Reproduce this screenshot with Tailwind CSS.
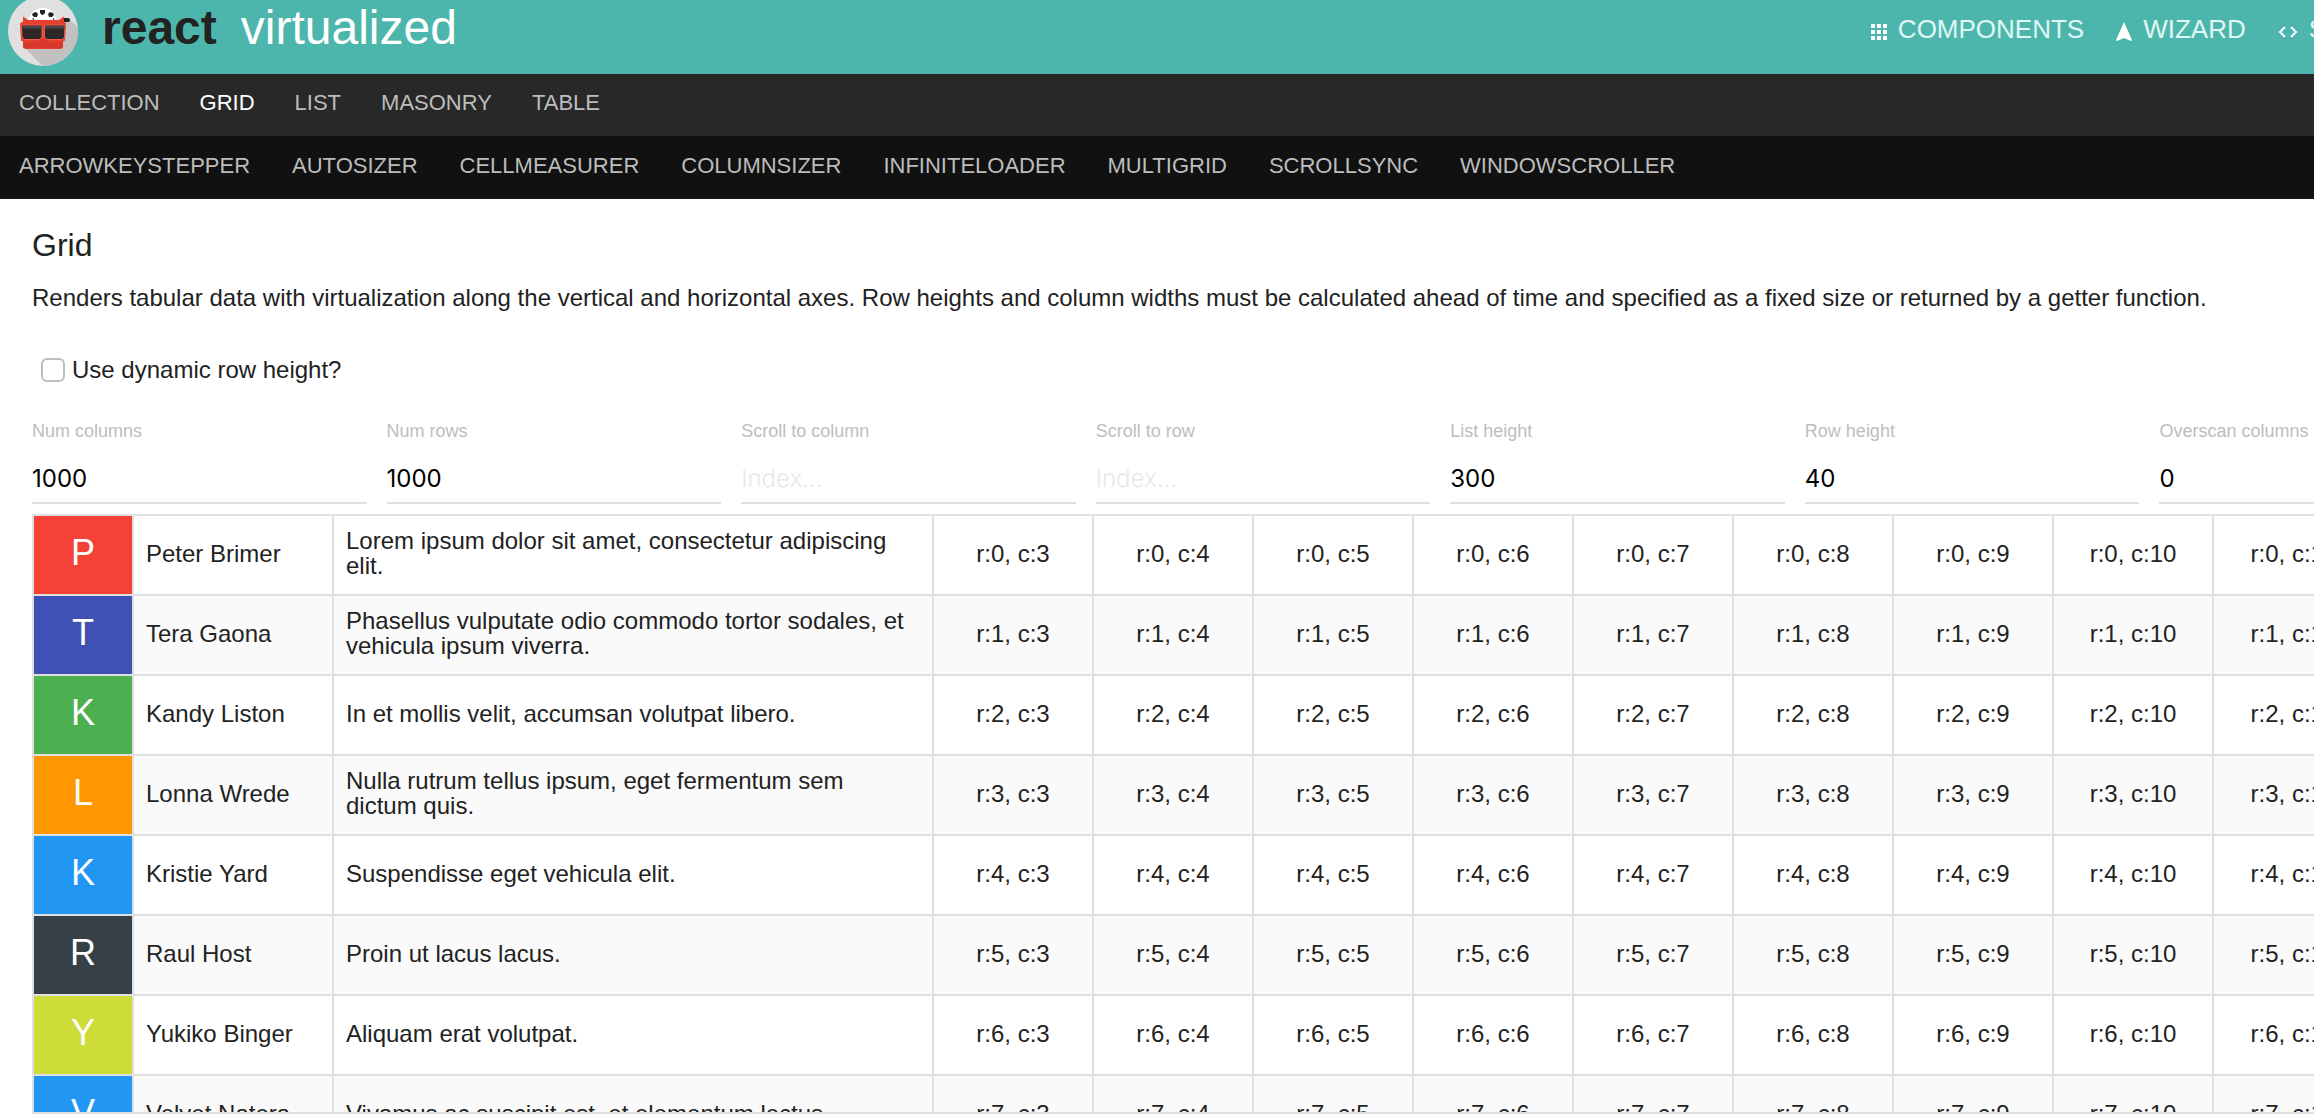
<!DOCTYPE html>
<html lang="en">

<head>
    <meta charset="UTF-8">
    <meta name="viewport" content="width=device-width, initial-scale=1.0">
    <title>react-virtualized</title>
    <!-- Tailwind CSS -->
    <script src="https://cdn.jsdelivr.net/npm/@tailwindcss/browser@4"></script>
</head>

<body class="bg-white font-['Liberation_Sans',Arial,sans-serif] text-2xl leading-[25px] text-[#222] overflow-hidden whitespace-nowrap">
    <!-- Header -->
    <header class="h-[74px] bg-[#4db6ac] flex items-start justify-between overflow-hidden">
        <a href="#" class="flex items-start">
            <svg class="w-[70px] h-[70px] ml-2 -mt-1 shrink-0" viewBox="0 0 70 70" role="img" aria-label="Logo">
                <circle cx="35" cy="35" r="35" fill="#e0e0e0"></circle>
                <path d="M17 52 L34.5 70 A35 35 0 0 0 69.8 31 L61 23 Z" fill="#c2c0c0"></path>
                <path d="M20 25 C22 16 28 12 35 12 C42 12 47 16 49 25 Z" fill="#fff"></path>
                <path d="M25 17l3-1 2 2-1 3-3 0-2-2zM32 14h5v3l-2 2h-1l-2-2zM42 16l3 1 1 2-2 2-3 0-1-3z" fill="#222"></path>
                <path d="M24 23l2-1v2zM45 22l2 1-2 1z" fill="#222"></path>
                <rect x="54" y="22" width="8" height="4" rx="2" fill="#222"></rect>
                <path d="M15 20.500l5 3.500h31l5-3.500v5l2 2-1 17-2 1v6l-2 1.500H17l-2-1.500v-6l-2-1-1-17 3-2z" fill="#e53f30"></path>
                <path d="M15 46h15l3-3h5l3 3h14v4l-2 2H17l-2-2z" fill="#d8372b"></path>
                <path d="M13.500 29h20.500v12l-2 2.500H16l-2-2.500zM36.500 29H57l-.5 12-2 2.500H38.500l-2-2.500z" fill="#2b2627" stroke="#f4594b"></path>
                <path d="M14.500 30h19v2.500h-19zM37 30h19.500v2.500H37z" fill="#4b4648"></path>
            </svg>
            <span class="ml-6 text-5xl leading-[56px] font-bold">react</span>
            <span class="ml-6 text-5xl leading-[56px] text-white">virtualized</span>
        </a>
        <nav class="flex shrink-0 -mr-[106px] mt-[17px] gap-8 text-[#e0f7f5] text-[26px]">
            <a href="#" class="flex items-center gap-[11px]">
                <svg class="w-4 h-4 mt-1" viewBox="0 0 16 16" fill="#fff"><path d="M0 0h4v4H0zM6 0h4v4H6zM12 0h4v4h-4zM0 6h4v4H0zM6 6h4v4H6zM12 6h4v4h-4zM0 12h4v4H0zM6 12h4v4H6zM12 12h4v4h-4z"></path></svg>
                COMPONENTS
            </a>
            <a href="#" class="flex items-center gap-[11px]">
                <svg class="w-4 h-5 mt-1" viewBox="0 0 16 20" fill="#fff"><path d="M8 0l8 18-1 1-7-3-7 3-1-1z"></path></svg>
                WIZARD
            </a>
            <a href="#" class="flex items-center gap-[11px]">
                <svg class="w-5 h-3 mt-1" viewBox="0 0 20 12" fill="none" stroke="#fff" stroke-width="2"><path d="M7 1L2 6l5 5M13 1l5 5-5 5"></path></svg>
                SOURCE
            </a>
        </nav>
    </header>

    <!-- Main navigation -->
    <nav class="h-[62px] bg-[#282828] flex items-center px-[19px] gap-10 text-[22px] text-[#bdbdbd] pb-1.5">
        <a href="#">COLLECTION</a>
        <a href="#" class="text-white">GRID</a>
        <a href="#">LIST</a>
        <a href="#">MASONRY</a>
        <a href="#">TABLE</a>
    </nav>

    <!-- Secondary navigation -->
    <nav class="h-[63px] bg-[#111] flex items-center px-[19px] gap-[42px] text-[22px] text-[#bdbdbd] pb-1">
        <a href="#">ARROWKEYSTEPPER</a>
        <a href="#">AUTOSIZER</a>
        <a href="#">CELLMEASURER</a>
        <a href="#">COLUMNSIZER</a>
        <a href="#">INFINITELOADER</a>
        <a href="#">MULTIGRID</a>
        <a href="#">SCROLLSYNC</a>
        <a href="#">WINDOWSCROLLER</a>
    </nav>

    <main class="pl-8 pt-7">
        <h1 class="text-[32px] leading-9">Grid</h1>
        <p class="mt-[19px] leading-8">Renders tabular data with virtualization along the vertical and horizontal axes. Row heights and column widths must be calculated ahead of time and specified as a fixed size or returned by a getter function.</p>
        <label class="mt-10 ml-[9px] flex items-center gap-[7px] leading-8">
            <input type="checkbox" class="appearance-none w-6 h-6 rounded-md border-2 border-[#bdbdbd] bg-white">
            Use dynamic row height?
        </label>

        <!-- Grid options -->
        <div id="options" class="mt-[33px] grid grid-cols-7 gap-5 w-[2462px]"></div>

        <!-- Data grid -->
        <div class="mt-[10px] h-[600px] border-2 border-r-0 border-[#e0e0e0] overflow-hidden">
            <table class="table-fixed border-separate border-spacing-0 w-[2658px]">
                <colgroup id="cols"></colgroup>
                <tbody id="rows"></tbody>
            </table>
        </div>
    </main>

    <script>
        const options = [
            ['Num columns', '1000'],
            ['Num rows', '1000'],
            ['Scroll to column', ''],
            ['Scroll to row', ''],
            ['List height', '300'],
            ['Row height', '40'],
            ['Overscan columns', '0'],
        ];
        const people = [
            ['Peter Brimer', 'Lorem ipsum dolor sit amet, consectetur adipiscing elit.', 'bg-[#f44336]'],
            ['Tera Gaona', 'Phasellus vulputate odio commodo tortor sodales, et vehicula ipsum viverra.', 'bg-[#3f51b5]'],
            ['Kandy Liston', 'In et mollis velit, accumsan volutpat libero.', 'bg-[#4caf50]'],
            ['Lonna Wrede', 'Nulla rutrum tellus ipsum, eget fermentum sem dictum quis.', 'bg-[#ff9800]'],
            ['Kristie Yard', 'Suspendisse eget vehicula elit.', 'bg-[#2196f3]'],
            ['Raul Host', 'Proin ut lacus lacus.', 'bg-[#374046]'],
            ['Yukiko Binger', 'Aliquam erat volutpat.', 'bg-[#cddc39]'],
            ['Velvet Natera', 'Vivamus ac suscipit est, et elementum lectus.', 'bg-[#2196f3]'],
        ];

        document.getElementById('options').innerHTML = options.map(([label, value], i) => `
            <div>
                <label for="option${i}" class="block text-lg leading-6 text-[#bdbdbd]">${label}</label>
                <input id="option${i}" type="text" value="${value}" placeholder="Index..." class="block w-full h-12 mt-[13px] pb-px border-b-2 border-[#e0e0e0] font-['Inter',sans-serif] text-black placeholder:font-light placeholder:text-[#e8e8e8] outline-none">
            </div>`).join('');

        const widths = [100, 200, 600];
        for (let c = 3; c < 14; c++) widths.push(160);
        document.getElementById('cols').innerHTML = widths.map(w => `<col style="width:${w}px">`).join('');

        const cell = 'h-20 border-b-2 border-r-2 border-[#e0e0e0]';
        document.getElementById('rows').innerHTML = people.map(([name, text, color], r) => {
            let html = `<td class="${cell} ${color} text-center text-4xl pb-1 text-white">${name[0]}</td>
                <td class="${cell} px-3 pb-1">${name}</td>
                <td class="${cell} px-3 pb-1 whitespace-normal">${text}</td>`;
            for (let c = 3; c < 14; c++) html += `<td class="${cell} pb-1 text-center">r:${r}, c:${c}</td>`;
            return `<tr class="${r % 2 ? 'bg-[#fafafa]' : 'bg-white'}">${html}</tr>`;
        }).join('');
    </script>
</body>

</html>
